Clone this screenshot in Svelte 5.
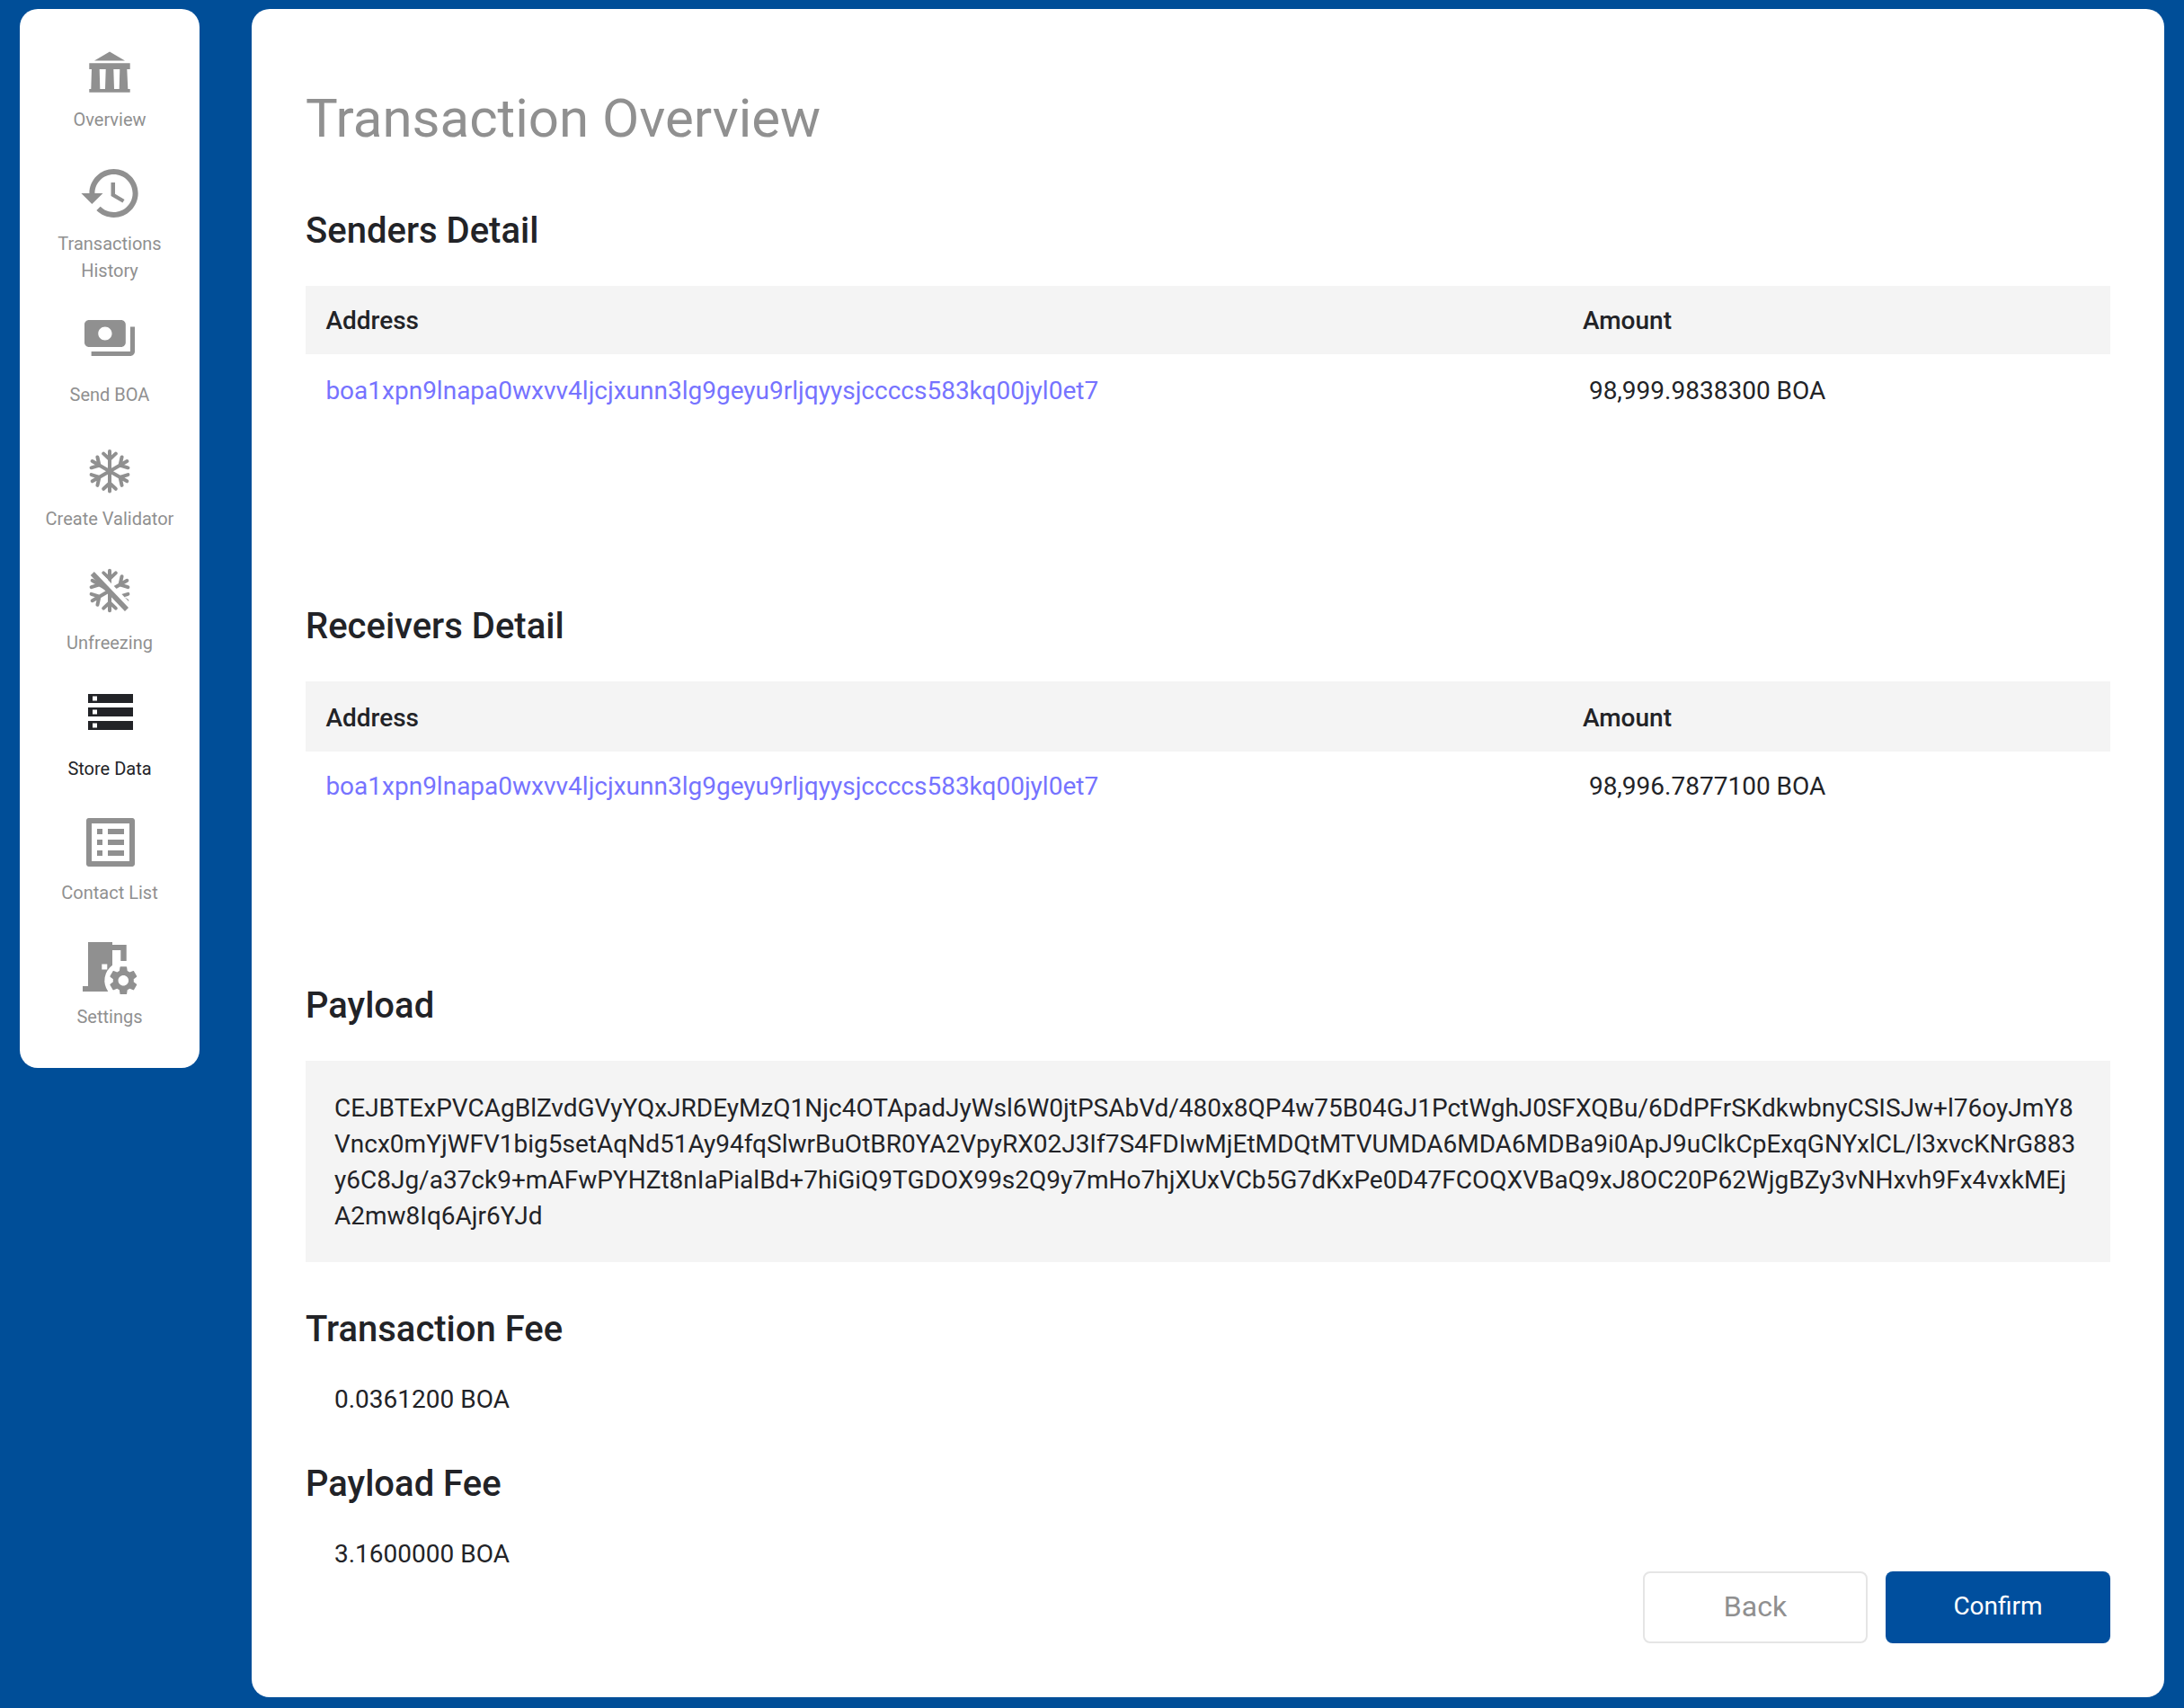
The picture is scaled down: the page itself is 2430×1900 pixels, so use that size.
<script>
  const address = 'boa1xpn9lnapa0wxvv4ljcjxunn3lg9geyu9rljqyysjccccs583kq00jyl0et7';

  const menu = [
    { id: 'overview', label: 'Overview' },
    { id: 'history', label: 'Transactions History' },
    { id: 'send', label: 'Send BOA' },
    { id: 'validator', label: 'Create Validator' },
    { id: 'unfreeze', label: 'Unfreezing' },
    { id: 'store', label: 'Store Data', active: true },
    { id: 'contacts', label: 'Contact List' },
    { id: 'settings', label: 'Settings' }
  ];

  const payload = [
    'CEJBTExPVCAgBlZvdGVyYQxJRDEyMzQ1Njc4OTApadJyWsl6W0jtPSAbVd/480x8QP4w75B04GJ1PctWghJ0SFXQBu/6DdPFrSKdkwbnyCSISJw+l76oyJmY8',
    'Vncx0mYjWFV1big5setAqNd51Ay94fqSlwrBuOtBR0YA2VpyRX02J3If7S4FDIwMjEtMDQtMTVUMDA6MDA6MDBa9i0ApJ9uClkCpExqGNYxlCL/l3xvcKNrG883',
    'y6C8Jg/a37ck9+mAFwPYHZt8nIaPialBd+7hiGiQ9TGDOX99s2Q9y7mHo7hjXUxVCb5G7dKxPe0D47FCOQXVBaQ9xJ8OC20P62WjgBZy3vNHxvh9Fx4vxkMEj',
    'A2mw8Iq6Ajr6YJd'
  ];

  const arms = [0, 60, 120, 180, 240, 300];
</script>

{#snippet snowflake(cy)}
  <g transform="translate(40 {cy})" fill="none" stroke="currentColor" stroke-width="4" stroke-linecap="round">
    {#each arms as angle}
      <path transform="rotate({angle})" d="M0 0V-22.3M-6.8-19.6L0-13.3L6.8-19.6" />
    {/each}
  </g>
{/snippet}

{#snippet detail(title, amount, extra)}
  <section class={['detail', extra]}>
    <h2>{title}</h2>
    <div class="row head"><span>Address</span><span>Amount</span></div>
    <div class="row body"><span class="link">{address}</span><span class="value">{amount}</span></div>
  </section>
{/snippet}

<div class="page">
  <nav>
    {#each menu as item}
      <div class="item" class:active={item.active}>
        <svg viewBox="0 0 80 90" fill="currentColor">
          {#if item.id === 'overview'}
            <path d="M40 33.5L57 43.5H23zM17.3 46.3H62.7V53H17.3zM20 53H28.7L29.3 75H35L35.7 53H44.3L45 75H50.7L51.3 53H59.3L60.3 75H62.7V78.7H17.3V75H19.3z" />
          {:else if item.id === 'history'}
            <path transform="translate(5.4 17) scale(3.01 3)" d="M13 3c-4.97 0-9 4.03-9 9H1l3.89 3.89.07.14L9 12H6c0-3.87 3.13-7 7-7s7 3.13 7 7-3.13 7-7 7c-1.93 0-3.68-.79-4.94-2.06l-1.42 1.42C8.27 19.99 10.51 21 13 21c4.97 0 9-4.03 9-9s-4.03-9-9-9zm-1 5v5l4.28 2.54.72-1.21-3.5-2.08V8H12z" />
          {:else if item.id === 'send'}
            <path transform="translate(9.45 16) scale(2.545 2.5)" d="M19 14V6c0-1.1-.9-2-2-2H3c-1.1 0-2 .9-2 2v8c0 1.1.9 2 2 2h14c1.1 0 2-.9 2-2zm-9-1c-1.66 0-3-1.34-3-3s1.34-3 3-3 3 1.34 3 3-1.34 3-3 3zm13-6v11c0 1.1-.9 2-2 2H4v-2h17V7h2z" />
          {:else if item.id === 'validator'}
            {@render snowflake(56.2)}
          {:else if item.id === 'unfreeze'}
            {@render snowflake(51)}
            <path d="M24 28.5L64 70" stroke="#fff" stroke-width="5.5" />
            <path d="M20.8 32L59 72" stroke="currentColor" stroke-width="5.6" />
          {:else if item.id === 'store'}
            <path transform="translate(11 18) scale(2.5)" d="M2 20h20v-4H2v4zm2-3h2v2H4v-2zM2 4v4h20V4H2zm4 3H4V5h2v2zm-4 7h20v-4H2v4zm2-3h2v2H4v-2z" />
          {:else if item.id === 'contacts'}
            <path transform="translate(5 17) scale(3)" d="M19 5v14H5V5h14m1.1-2H3.9c-.5 0-.9.4-.9.9v16.2c0 .4.4.9.9.9h16.2c.4 0 .9-.5.9-.9V3.9c0-.5-.5-.9-.9-.9zM11 7h6v2h-6V7zm0 4h6v2h-6v-2zm0 4h6v2h-6v-2zM7 7h2v2H7V7zm0 4h2v2H7v-2zm0 4h2v2H7v-2z" />
          {:else}
            <path fill-rule="evenodd" d="M16 26H43V51.7A21 21 0 0 0 38.3 81H10V75H16zM31.3 50.4V56.6H37.3V50.4zM43 29H58.7V47H52.3V35H43z" />
            <path transform="translate(36.1 49.5) scale(1.6)" d="M19.14 12.94c.04-.3.06-.61.06-.94 0-.32-.02-.64-.07-.94l2.03-1.58c.18-.14.23-.41.12-.61l-1.92-3.32c-.12-.22-.37-.29-.59-.22l-2.39.96c-.5-.38-1.03-.7-1.62-.94l-.36-2.54c-.04-.24-.24-.41-.48-.41h-3.84c-.24 0-.43.17-.47.41l-.36 2.54c-.59.24-1.13.57-1.62.94l-2.39-.96c-.22-.08-.47 0-.59.22L2.74 8.87c-.12.21-.08.47.12.61l2.03 1.58c-.05.3-.09.63-.09.94s.02.64.07.94l-2.03 1.58c-.18.14-.23.41-.12.61l1.92 3.32c.12.22.37.29.59.22l2.39-.96c.5.38 1.03.7 1.62.94l.36 2.54c.05.24.24.41.48.41h3.84c.24 0 .44-.17.47-.41l.36-2.54c.59-.24 1.13-.56 1.62-.94l2.39.96c.22.08.47 0 .59-.22l1.92-3.32c.12-.22.07-.47-.12-.61l-2.01-1.58zM12 15.6c-1.98 0-3.6-1.62-3.6-3.6s1.62-3.6 3.6-3.6 3.6 1.62 3.6 3.6-1.62 3.6-3.6 3.6z" />
          {/if}
        </svg>
        <span class="label">{item.label}</span>
      </div>
    {/each}
  </nav>

  <main>
    <h1>Transaction Overview</h1>
    {@render detail('Senders Detail', '98,999.9838300 BOA', 'senders')}
    {@render detail('Receivers Detail', '98,996.7877100 BOA', 'receivers')}
    <section class="payload">
      <h2>Payload</h2>
      <div class="box">
        {#each payload as line}<div>{line}</div>{/each}
      </div>
    </section>
    <section class="fee">
      <h2>Transaction Fee</h2>
      <p>0.0361200 BOA</p>
    </section>
    <section class="fee">
      <h2>Payload Fee</h2>
      <p>3.1600000 BOA</p>
    </section>
    <footer>
      <button class="back">Back</button>
      <button class="confirm">Confirm</button>
    </footer>
  </main>
</div>

<style>
  :global(body) {
    margin: 0;
    background: #004e98;
  }
  .page {
    box-sizing: border-box;
    width: 2430px;
    height: 1900px;
    padding: 10px 22px 12px;
    display: flex;
    align-items: flex-start;
    gap: 58px;
    background: #004e98;
    color: #222327;
    font-family: Roboto, sans-serif;
    font-size: 28px;
    line-height: 40px;
  }
  nav {
    box-sizing: border-box;
    width: 200px;
    height: 1178px;
    flex: none;
    background: #fff;
    border-radius: 20px;
  }
  .item {
    display: flex;
    flex-direction: column;
    align-items: center;
    padding-top: 14px;
    color: #909090;
  }
  .item svg {
    width: 80px;
    height: 90px;
    margin-bottom: 4px;
  }
  .item.active {
    color: #222327;
  }
  .item.active svg {
    margin-bottom: 6px;
  }
  .label {
    width: 150px;
    font-size: 20px;
    line-height: 30px;
    text-align: center;
  }
  main {
    box-sizing: border-box;
    width: 2128px;
    height: 1878px;
    flex: none;
    padding: 82px 60px 60px;
    display: flex;
    flex-direction: column;
    background: #fff;
    border-radius: 20px;
  }
  h1 {
    margin: 0 0 61px;
    font-size: 60px;
    line-height: 80px;
    font-weight: 400;
    color: #909090;
  }
  h2 {
    margin: 0;
    font-size: 40px;
    line-height: 48px;
    font-weight: 500;
  }
  .senders {
    height: 440px;
  }
  .receivers {
    height: 422px;
  }
  .row {
    display: grid;
    grid-template-columns: 1398.5px 1fr;
    padding: 0 22px 0 22.4px;
  }
  .head {
    box-sizing: border-box;
    margin-top: 37px;
    height: 76px;
    padding-top: 2px;
    align-items: center;
    font-weight: 500;
    background: #f4f4f4;
  }
  .receivers .head {
    height: 78px;
    padding-top: 3px;
  }
  .body {
    margin-top: 21px;
  }
  .receivers .body {
    margin-top: 19px;
  }
  .link {
    color: #7673ff;
  }
  .value {
    padding-left: 7px;
  }
  .payload {
    height: 360px;
  }
  .box {
    margin-top: 37px;
    padding: 33px 32px 31px;
    background: #f4f4f4;
    white-space: nowrap;
  }
  .fee {
    height: 172px;
  }
  .fee p {
    margin: 34px 0 0;
    padding-left: 32px;
  }
  footer {
    display: flex;
    justify-content: flex-end;
    gap: 20px;
    margin-top: -51px;
  }
  button {
    box-sizing: border-box;
    width: 250px;
    height: 80px;
    padding: 0 0 2px;
    border-radius: 8px;
    font-family: inherit;
  }
  .back {
    border: 2px solid #e5e5e5;
    background: #fff;
    color: #909090;
    font-size: 32px;
  }
  .confirm {
    border: 0;
    padding-bottom: 4px;
    background: #004f9e;
    color: #fff;
    font-size: 28px;
  }
</style>
